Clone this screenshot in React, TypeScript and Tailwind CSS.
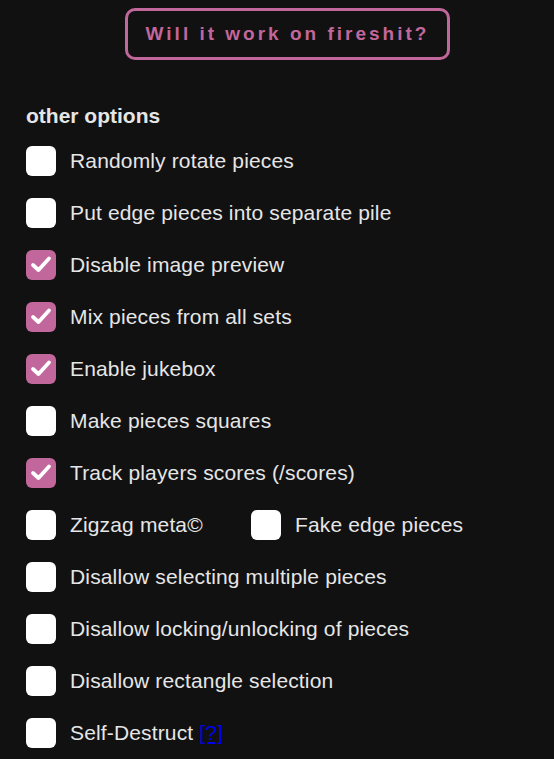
import React from "react";

type Opt = { label: string; checked: boolean };

function Box({ checked }: { checked: boolean }) {
  return (
    <span
      className={`relative block h-[30px] w-[30px] shrink-0 rounded-[6px] ${
        checked ? "bg-[#c2679b]" : "bg-white"
      }`}
    >
      {checked && (
        <svg width="30" height="30" viewBox="0 0 30 30" fill="none">
          <path
            d="M7 15l5.5 5L23 8.5"
            stroke="white"
            strokeWidth="3.8"
            strokeLinecap="round"
            strokeLinejoin="round"
          />
        </svg>
      )}
    </span>
  );
}

function Row({ label, checked }: Opt) {
  return (
    <label className="flex h-[30px] items-center gap-[14px]">
      <Box checked={checked} />
      <span>{label}</span>
    </label>
  );
}

const before: Opt[] = [
  { label: "Randomly rotate pieces", checked: false },
  { label: "Put edge pieces into separate pile", checked: false },
  { label: "Disable image preview", checked: true },
  { label: "Mix pieces from all sets", checked: true },
  { label: "Enable jukebox", checked: true },
  { label: "Make pieces squares", checked: false },
  { label: "Track players scores (/scores)", checked: true },
];

const after: Opt[] = [
  { label: "Disallow selecting multiple pieces", checked: false },
  { label: "Disallow locking/unlocking of pieces", checked: false },
  { label: "Disallow rectangle selection", checked: false },
];

export default function App() {
  return (
    <div
      className="h-[759px] overflow-hidden bg-[#111111] text-[#e6e6e6]"
      style={{ fontFamily: '"Liberation Sans", Arial, sans-serif' }}
    >
      <div className="pl-[125px] pt-[8px]">
        <button
          type="button"
          className="h-[52px] w-[325px] rounded-[10px] border-[3px] border-[#c2679b] pt-[1px] text-[19px] font-bold tracking-[3px] text-[#c2679b]"
        >
          Will it work on fireshit?
        </button>
      </div>

      <div className="px-[26px] pt-[44px]">
        <h2 className="text-[21px] font-bold leading-[24px]">other options</h2>
        <div className="mt-[18px] flex flex-col gap-[22px] text-[21px] tracking-[0.15px]">
          {before.map((o) => (
            <Row key={o.label} {...o} />
          ))}
          <div className="flex h-[30px] items-center">
            <div className="w-[225px]">
              <Row label="Zigzag meta©" checked={false} />
            </div>
            <Row label="Fake edge pieces" checked={false} />
          </div>
          {after.map((o) => (
            <Row key={o.label} {...o} />
          ))}
          <label className="flex h-[30px] items-center gap-[14px]">
            <Box checked={false} />
            <span>
              Self-Destruct{" "}
              <a href="#" className="text-[#0000ee] underline">
                [?]
              </a>
            </span>
          </label>
        </div>
      </div>
    </div>
  );
}
